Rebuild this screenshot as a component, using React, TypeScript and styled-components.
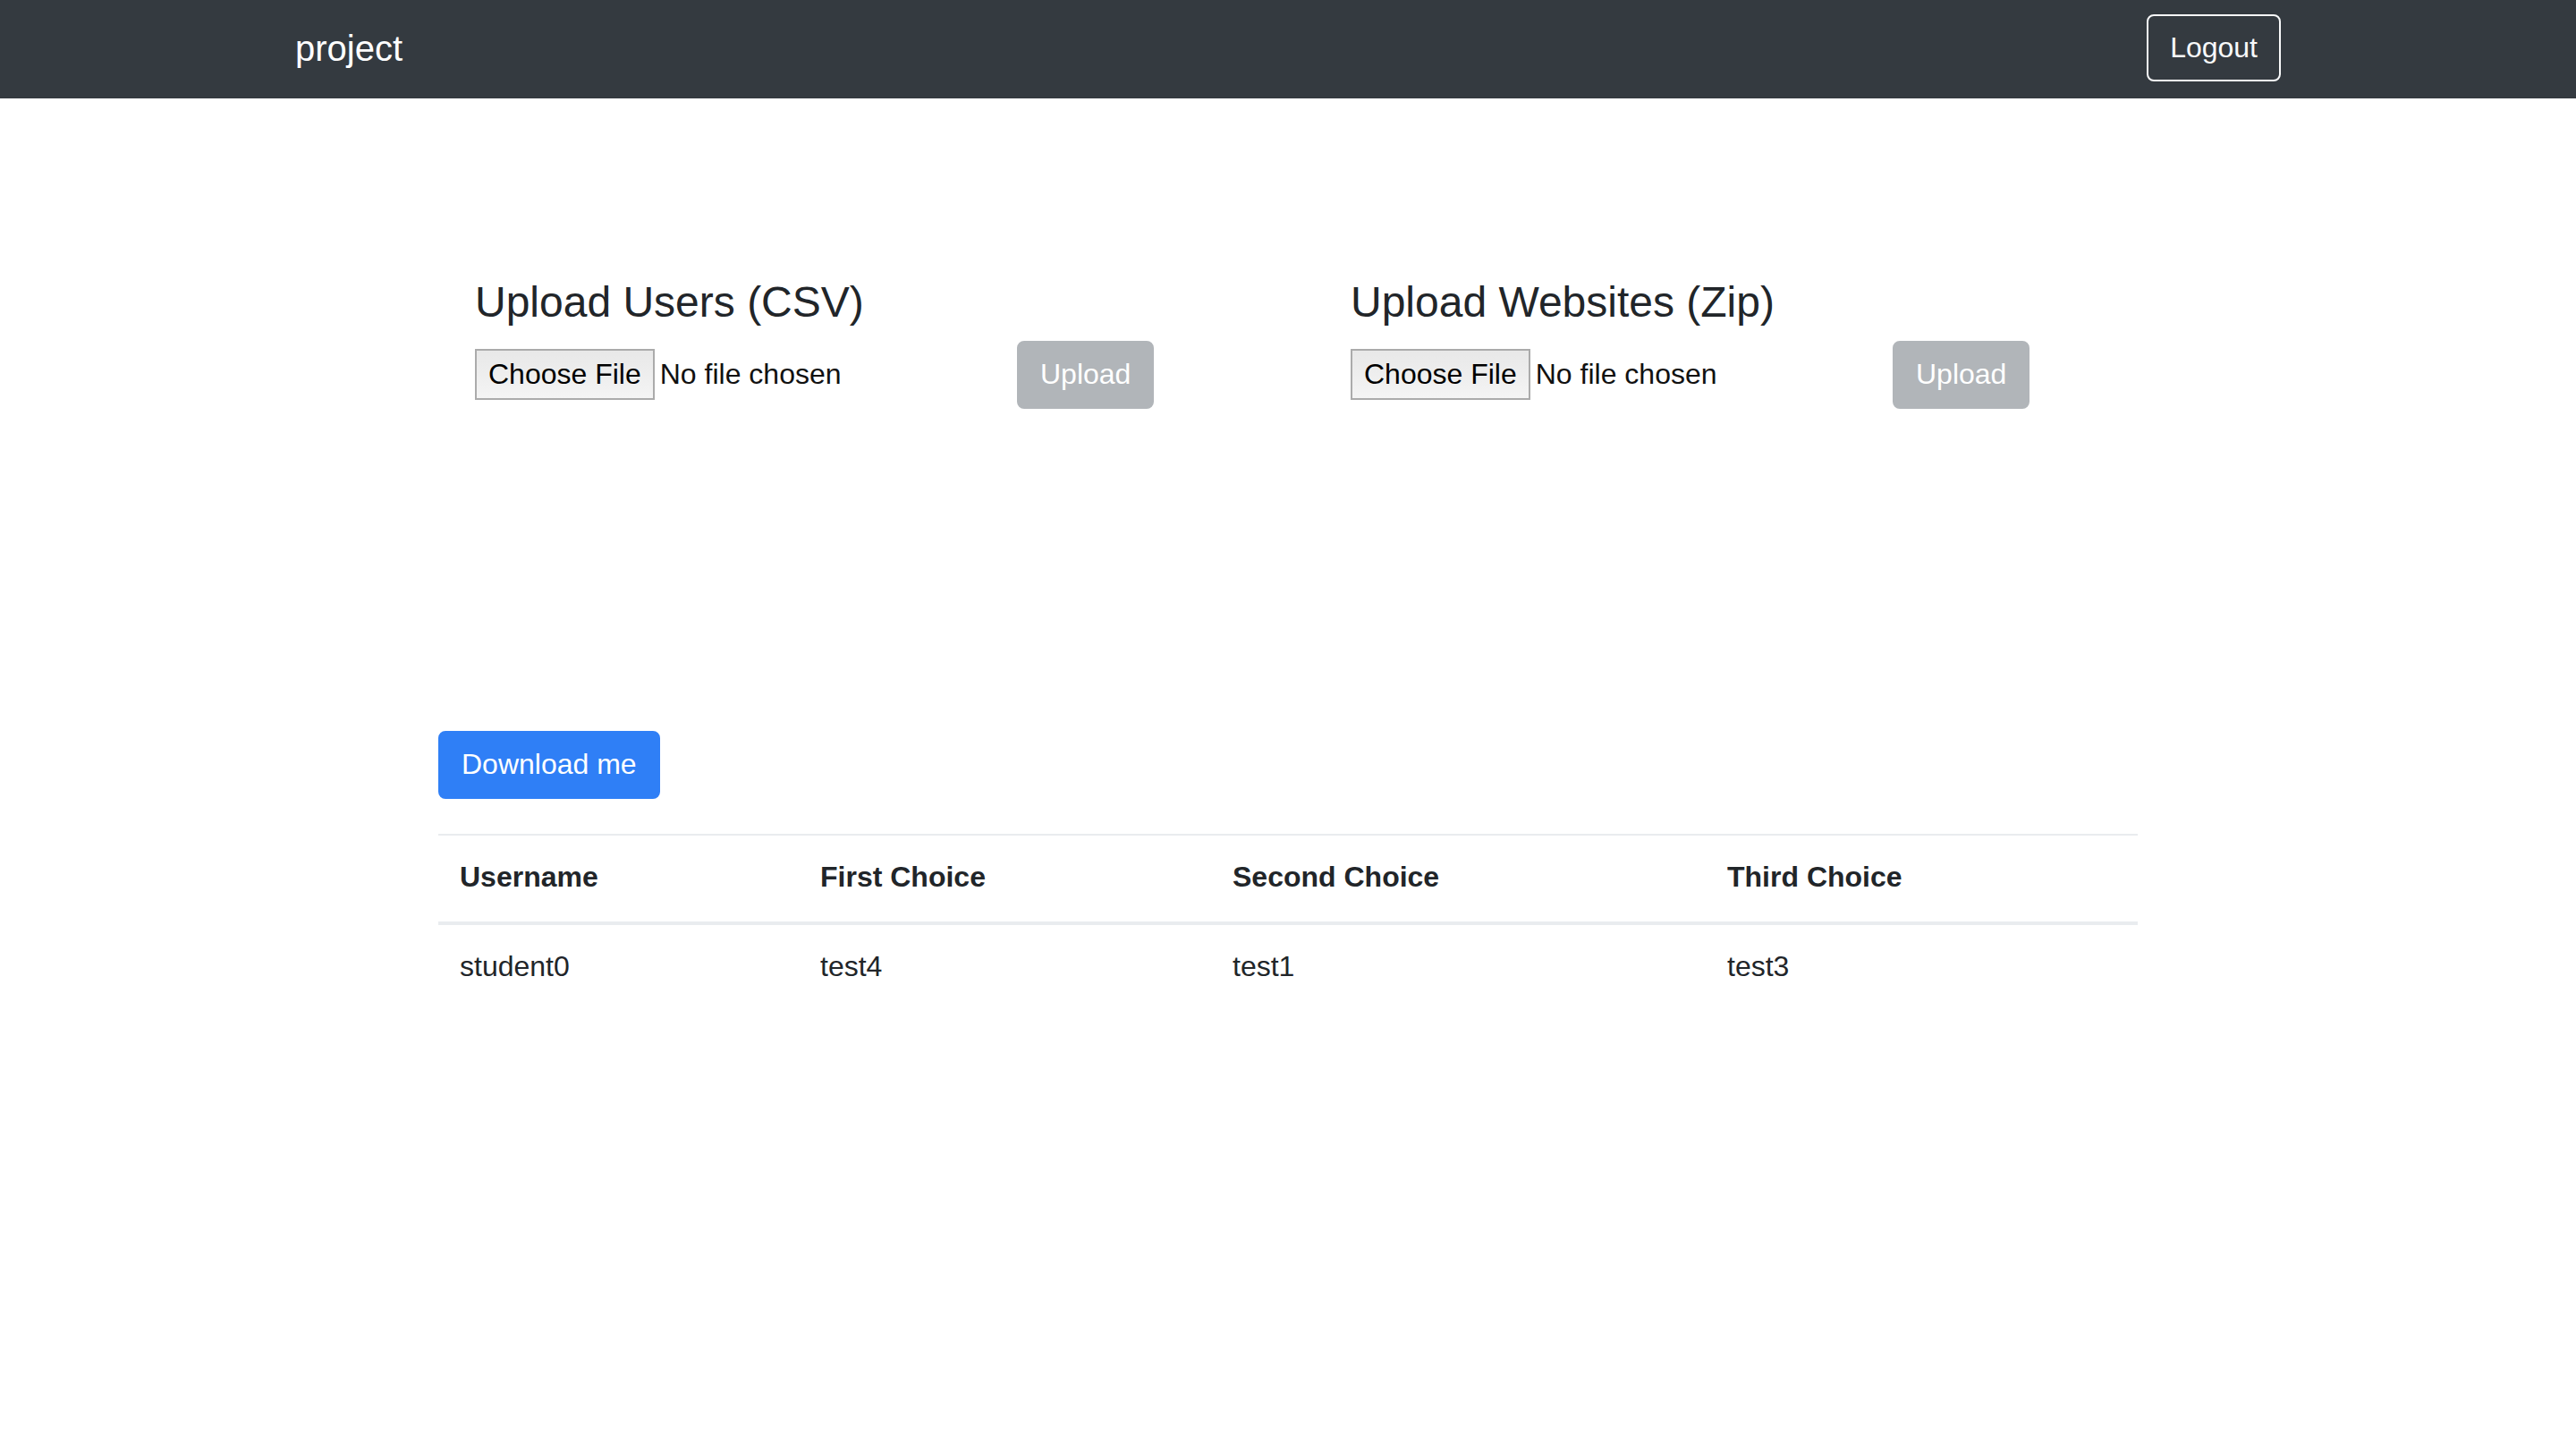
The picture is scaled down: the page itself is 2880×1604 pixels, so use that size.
import React from "react";
import styled, { createGlobalStyle } from "styled-components";

const GlobalStyle = createGlobalStyle`
  * {
    box-sizing: border-box;
  }

  html, body {
    margin: 0;
    padding: 0;
    background: #fff;
  }

  body {
    font-family: "Liberation Sans", Arial, Helvetica, sans-serif;
    font-size: 32px;
    line-height: 1.5;
    color: #212529;
  }
`;

const Navbar = styled.nav`
  display: flex;
  align-items: center;
  justify-content: space-between;
  height: 110px;
  padding: 0 330px 3px;
  background: #343a40;
`;

const Brand = styled.a`
  font-size: 40px;
  line-height: 60px;
  color: #fff;
  text-decoration: none;
`;

const OutlineButton = styled.button`
  font-family: inherit;
  font-size: 32px;
  line-height: 46px;
  padding: 12px 24px 13px;
  border: 2px solid #f8f9fa;
  border-radius: 8px;
  background: transparent;
  color: #f8f9fa;
  cursor: pointer;
`;

const Main = styled.main`
  width: 1900px;
  margin: 0 auto;
  padding-top: 199px;
`;

const UploadGrid = styled.section`
  display: grid;
  grid-template-columns: 758px 758px;
  column-gap: 221px;
  margin-left: 41px;
`;

const UploadTitle = styled.h4`
  margin: 0 0 14px;
  font-size: 48px;
  font-weight: 400;
  line-height: 1.2;
  color: #212529;
`;

const UploadRow = styled.form`
  display: flex;
  align-items: center;
  justify-content: space-between;
`;

const FileInput = styled.input.attrs({ type: "file" })`
  font-family: "Liberation Sans", Arial, Helvetica, sans-serif;
  font-size: 32px;
  line-height: 53px;
  color: #111;

  &::file-selector-button {
    font-family: inherit;
    font-size: 32px;
    height: 57px;
    padding: 0 13px;
    margin: 0 6px 0 0;
    border: 2px solid #ababab;
    border-radius: 0;
    background: linear-gradient(#e8e8e8, #f4f4f4);
    color: #000;
  }
`;

const ActionButton = styled.button<{ $variant: "primary" | "muted" }>`
  font-family: inherit;
  font-size: 32px;
  line-height: 46px;
  padding: 12px 24px 14px;
  border: 2px solid ${(p) => (p.$variant === "primary" ? "#2f7ff6" : "#b1b5b9")};
  border-radius: 8px;
  background: ${(p) => (p.$variant === "primary" ? "#2f7ff6" : "#b1b5b9")};
  color: #fff;
  cursor: ${(p) => (p.$variant === "primary" ? "pointer" : "default")};
`;

const DownloadBar = styled.div`
  margin: 360px 0 39px;
`;

const Table = styled.table`
  width: 100%;
  border-collapse: collapse;
  table-layout: fixed;
  color: #212529;
`;

const HeadCell = styled.th<{ $width?: number }>`
  width: ${(p) => (p.$width ? `${p.$width}px` : "auto")};
  padding: 22px 24px 26px;
  text-align: left;
  font-weight: 700;
  line-height: 48px;
  border-top: 2px solid #e9ecef;
  border-bottom: 4px solid #e9ecef;
`;

const Cell = styled.td`
  padding: 22px 24px 26px;
  line-height: 48px;
  border-top: 2px solid #e9ecef;
`;

const uploads = [
  { title: "Upload Users (CSV)", accept: ".csv" },
  { title: "Upload Websites (Zip)", accept: ".zip" },
];

const columns = [
  { label: "Username", width: 403 },
  { label: "First Choice", width: 461 },
  { label: "Second Choice", width: 553 },
  { label: "Third Choice" },
];

const rows = [["student0", "test4", "test1", "test3"]];

export default function App() {
  return (
    <>
      <GlobalStyle />
      <Navbar>
        <Brand href="#">project</Brand>
        <OutlineButton>Logout</OutlineButton>
      </Navbar>

      <Main>
        <UploadGrid>
          {uploads.map((u) => (
            <div key={u.title}>
              <UploadTitle>{u.title}</UploadTitle>
              <UploadRow onSubmit={(e) => e.preventDefault()}>
                <FileInput accept={u.accept} />
                <ActionButton $variant="muted" type="submit" disabled>
                  Upload
                </ActionButton>
              </UploadRow>
            </div>
          ))}
        </UploadGrid>

        <DownloadBar>
          <ActionButton $variant="primary">Download me</ActionButton>
        </DownloadBar>

        <Table>
          <thead>
            <tr>
              {columns.map((c) => (
                <HeadCell key={c.label} $width={c.width}>
                  {c.label}
                </HeadCell>
              ))}
            </tr>
          </thead>
          <tbody>
            {rows.map((r) => (
              <tr key={r[0]}>
                {r.map((v, i) => (
                  <Cell key={i}>{v}</Cell>
                ))}
              </tr>
            ))}
          </tbody>
        </Table>
      </Main>
    </>
  );
}
